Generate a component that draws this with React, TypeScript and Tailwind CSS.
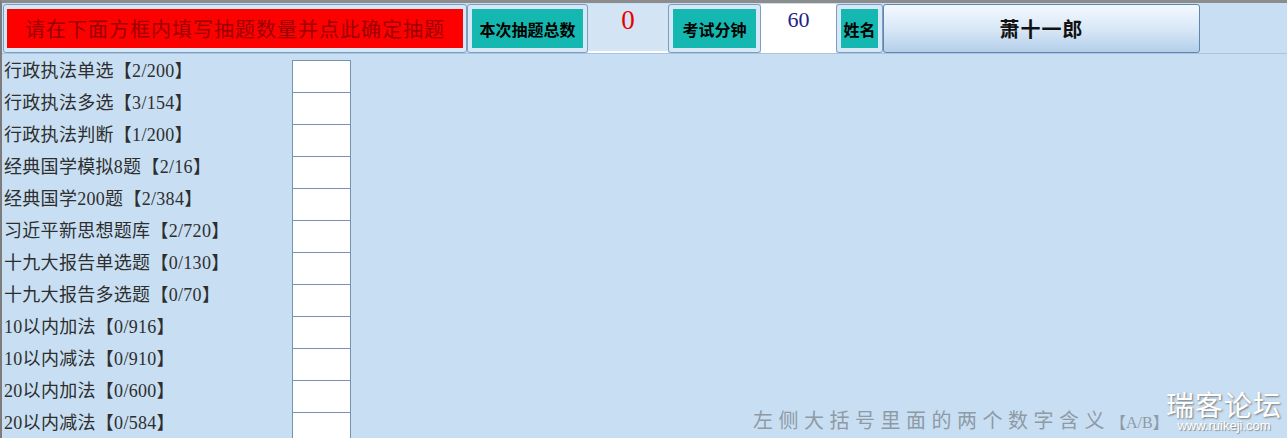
import React from 'react';

const ROWS = [
  '行政执法单选【2/200】',
  '行政执法多选【3/154】',
  '行政执法判断【1/200】',
  '经典国学模拟8题【2/16】',
  '经典国学200题【2/384】',
  '习近平新思想题库【2/720】',
  '十九大报告单选题【0/130】',
  '十九大报告多选题【0/70】',
  '10以内加法【0/916】',
  '10以内减法【0/910】',
  '20以内加法【0/600】',
  '20以内减法【0/584】',
];

const serif = { fontFamily: '"Liberation Serif", "Noto Sans CJK SC", serif' };

function TealButton({ label, width }: { label: string; width: string }) {
  return (
    <div className={`${width} h-[49px] shrink-0 rounded-[3px] border border-[#7d9ec3] bg-[#d6e7f6] p-[4px]`}>
      <div className="flex h-full items-center justify-center bg-[#14b8b0] text-[16px] font-bold text-black">
        {label}
      </div>
    </div>
  );
}

export default function App() {
  return (
    <div
      className="relative h-[438px] w-[1287px] overflow-hidden border-l-2 border-t-[3px] border-l-[#7c7c7c] border-t-[#8c8c8c] bg-[#c8dff3]"
      style={{ fontFamily: '"Noto Sans CJK SC", "Liberation Sans", sans-serif' }}
    >
      {/* 상단 도구 막대 */}
      <div className="border-b border-[#a9c5e2]">
        <div className="ml-[1px] mt-[1px] flex">
          <div className="h-[49px] w-[464px] shrink-0 rounded-[3px] border border-[#7d9ec3] bg-[#d6e7f6] px-[3px] py-[4px]">
            <div className="flex h-full items-center justify-center bg-[#fe0000] text-[20px] tracking-[1px] text-[#9a0000]">
              请在下面方框内填写抽题数量并点此确定抽题
            </div>
          </div>
          <TealButton label="本次抽题总数" width="w-[121px]" />
          <div className="flex h-[49px] w-[80px] shrink-0 justify-center border-b-2 border-white bg-[#d3e4f5]">
            <span className="mt-[1px] text-[27px] leading-[30px] text-[#e80000]" style={serif}>
              0
            </span>
          </div>
          <TealButton label="考试分钟" width="w-[93px]" />
          <div className="flex h-[49px] w-[75px] shrink-0 justify-center bg-white">
            <span className="mt-[4px] text-[22px] leading-[24px] text-[#22228a]" style={serif}>
              60
            </span>
          </div>
          <TealButton label="姓名" width="w-[47px]" />
          <div className="flex h-[49px] w-[317px] shrink-0 items-center justify-center rounded-[3px] border border-[#5f86b0] bg-gradient-to-b from-[#f4f9ff] via-[#d9e8f7] to-[#b4cfea] text-[20px] font-bold tracking-[1px] text-[#111]">
            萧十一郎
          </div>
        </div>
      </div>

      {/* 문제 목록 */}
      <div className="mt-[6px] flex">
        <div className="flex flex-col">
          {ROWS.map((label, i) => (
            <div key={i} className="flex h-[32px]">
              <div
                className="w-[290px] pl-[2px] text-[18px] leading-[22px] tracking-[0.3px] text-[#2e2e2e]"
                style={serif}
              >
                {label}
              </div>
              <div className="h-[33px] w-[59px] border border-[#7592b2] bg-white" />
            </div>
          ))}
        </div>
        <div className="flex flex-1 items-end pb-[8px] pl-[402px]">
          <span className="text-[20px] tracking-[5.5px] text-[#8e9aa6]" style={serif}>
            左侧大括号里面的两个数字含义
            <span className="text-[16px] tracking-normal">【A/B】</span>
          </span>
        </div>
      </div>

      {/* 워터마크 */}
      <div className="absolute bottom-[5px] right-[5px] flex flex-col items-center text-white">
        <span className="text-[28px] leading-[30px] tracking-[1px] [text-shadow:1px_1px_2px_#777]">瑞客论坛</span>
        <span className="text-[13px] leading-[14px] [text-shadow:1px_1px_1px_#888]" style={{ fontFamily: '"Liberation Sans", sans-serif' }}>
          www.ruikeji.com
        </span>
      </div>
    </div>
  );
}
